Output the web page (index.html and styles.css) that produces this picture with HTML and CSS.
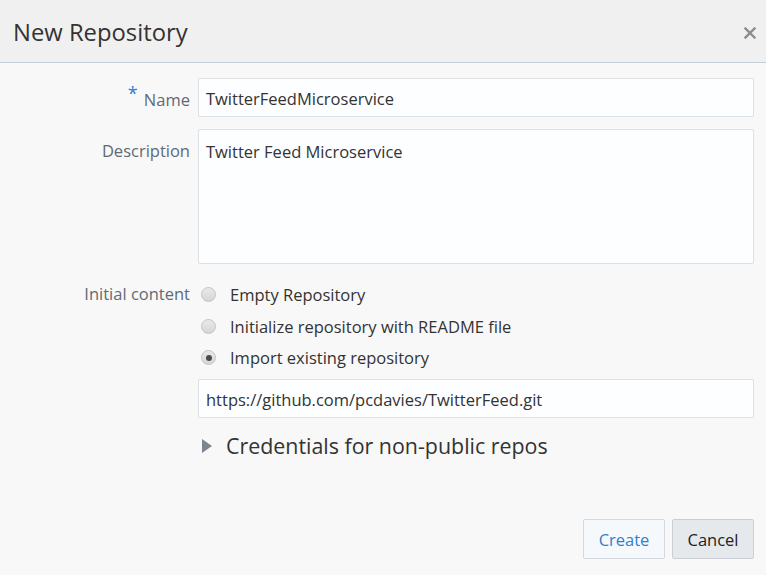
FILE: index.html
```html
<!DOCTYPE html>
<html>
<head>
<meta charset="utf-8">
<link rel="stylesheet" href="styles.css">
</head>
<body>
<div class="dialog">
  <div class="header">
    <h1 class="title">New Repository</h1>
    <svg class="close" width="12" height="12" viewBox="0 0 12 12"><path d="M1.5 1.5 L10.5 10.5 M10.5 1.5 L1.5 10.5" stroke="#878d93" stroke-width="2.4" stroke-linecap="square"/></svg>
  </div>
  <div class="body">
    <div class="form">
      <label class="label label-name"><span class="req">*</span> Name</label>
      <div class="field"><div class="input">TwitterFeedMicroservice</div></div>

      <label class="label label-desc">Description</label>
      <div class="field"><div class="textarea">Twitter Feed Microservice</div></div>

      <label class="label label-init">Initial content</label>
      <div class="field radios">
        <div class="radio-row"><span class="radio"></span><span class="radio-text">Empty Repository</span></div>
        <div class="radio-row"><span class="radio"></span><span class="radio-text">Initialize repository with README file</span></div>
        <div class="radio-row"><span class="radio checked"></span><span class="radio-text">Import existing repository</span></div>
        <div class="input url">https://github.com/pcdavies/TwitterFeed.git</div>
        <div class="disclosure"><span class="tri"></span><span class="disc-text">Credentials for non-public repos</span></div>
      </div>
    </div>
    <div class="footer">
      <button class="btn btn-create">Create</button>
      <button class="btn btn-cancel">Cancel</button>
    </div>
    <svg class="cursor" width="18" height="26" viewBox="0 0 18 26"><path d="M1 1 L1 19 L5 15 L8.5 23 L11.5 21.5 L8 14 L13.5 14 Z" fill="#fff" stroke="#000" stroke-width="1.2" stroke-linejoin="round"/></svg>
  </div>
</div>
</body>
</html>
```
FILE: styles.css
```css
* { box-sizing: border-box; }
html, body { margin: 0; padding: 0; overflow: hidden; }
body {
  width: 766px;
  height: 575px;
  background: #f8f8f8;
  font-family: "Open Sans", "Noto Sans", sans-serif;
  color: #333;
}
.dialog { display: flex; flex-direction: column; height: 575px; overflow: hidden; }
.header {
  flex: none;
  height: 63px;
  background: #f0f0f0;
  border-bottom: 1px solid #c6ced6;
  display: flex;
  align-items: center;
  justify-content: space-between;
  padding: 2px 10px 0 13px;
}
.title {
  margin: 0;
  font-weight: normal;
  font-size: 23.8px;
  color: #333;
}
.close { display: block; margin-top: 2px; }
.body {
  position: relative;
  flex: 1;
  min-height: 0;
  display: flex;
  flex-direction: column;
  padding: 15px 12px 16px 0;
}
.form {
  display: grid;
  grid-template-columns: 190px 1fr;
  column-gap: 8px;
  row-gap: 12px;
  align-items: start;
}
.label {
  text-align: right;
  color: #5f6a74;
  font-size: 16.5px;
  line-height: 22px;
}
.label-name { padding-top: 10px; }
.label-desc { padding-top: 11px; }
.label-init { padding-top: 7px; }
.req { color: #2b7fd4; font-size: 18px; position: relative; top: -6px; margin-right: 2px; }
.input, .textarea {
  background: #fdfeff;
  border: 1px solid #dce1e6;
  border-radius: 2px;
  font-size: 16.5px;
  color: #333;
  padding: 0 7px;
}
.input { height: 39px; line-height: 37px; padding-top: 1px; }
.textarea { height: 135px; padding-top: 11px; line-height: 22px; }
.radios { display: flex; flex-direction: column; padding-top: 3px; }
.radio-row { display: flex; align-items: center; height: 31.5px; }
.radio {
  flex: none;
  width: 15px; height: 15px;
  border-radius: 50%;
  border: 1px solid #c3c3c3;
  background: linear-gradient(#e9e9e9, #d6d6d6);
  margin-left: 3px;
  margin-right: 14px;
  position: relative;
}
.radio.checked::after {
  content: "";
  position: absolute;
  left: 3.5px; top: 3.5px;
  width: 6px; height: 6px;
  border-radius: 50%;
  background: #4a4a4a;
}
.radio-text { font-size: 16.5px; color: #333; }
.url { margin-top: 5px; }
.disclosure { display: flex; align-items: center; margin-top: 14px; height: 28px; }
.tri {
  flex: none;
  width: 0; height: 0;
  border-top: 7px solid transparent;
  border-bottom: 7px solid transparent;
  border-left: 10px solid #7d868f;
  margin-left: 4px;
  margin-right: 14px;
}
.disc-text { font-size: 21.4px; color: #333; }
.footer {
  margin-top: auto;
  display: flex;
  justify-content: flex-end;
  gap: 7px;
}
.btn {
  width: 82px;
  height: 40px;
  border-radius: 2px;
  font-family: inherit;
  font-size: 16.5px;
}
.btn-create { background: #f6f9fc; border: 1px solid #d3d9df; color: #2d7fd3; }
.btn-cancel { background: #e6e9ec; border: 1px solid #c9cfd5; color: #222; }
.cursor { position: absolute; left: 652px; top: 538px; }
```
